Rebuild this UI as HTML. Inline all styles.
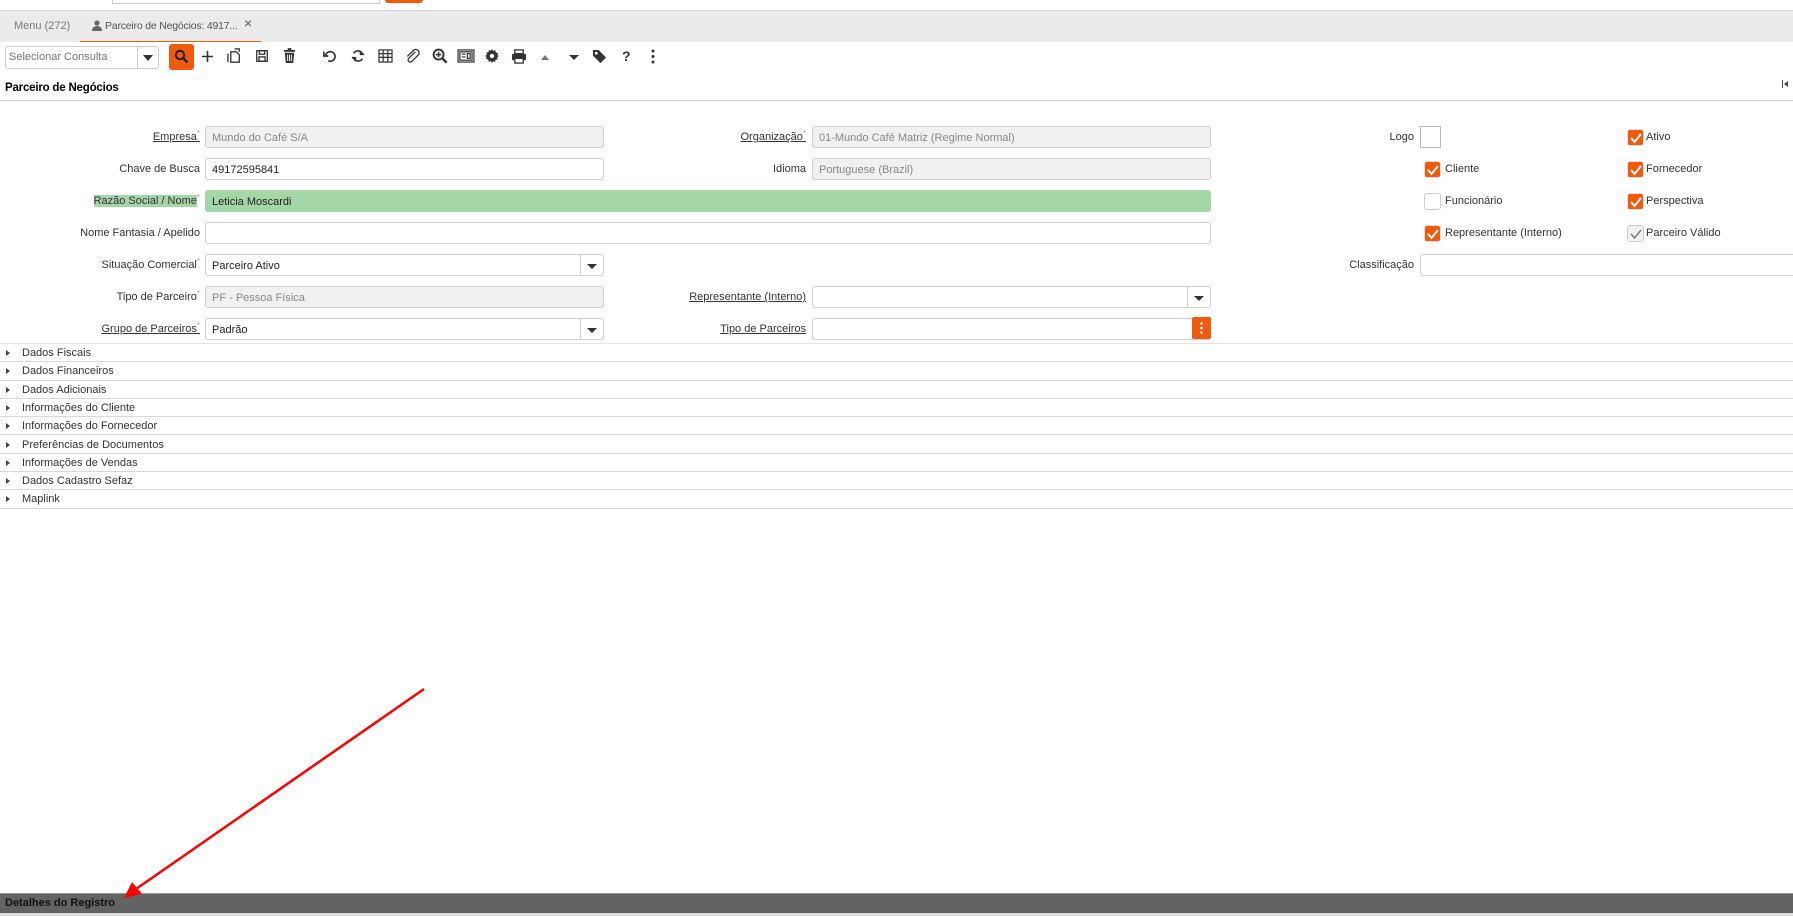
<!DOCTYPE html>
<html><head><meta charset="utf-8"><style>
*{box-sizing:border-box;margin:0;padding:0}
body{width:1793px;height:916px;position:relative;background:#fff;font-family:"Liberation Sans",sans-serif;font-size:11px;color:#333;overflow:hidden}
.a{position:absolute}
.lbl{position:absolute;text-align:right;white-space:nowrap;line-height:23px}
.lbl.u{text-decoration:underline}
.req::after{content:"*";color:#e88;font-size:8px;vertical-align:top;position:relative;top:-4px}
.in{position:absolute;height:22px;border:1px solid #d0d0d0;border-radius:3px;background:#fff;padding-left:6px;line-height:22px;color:#222;white-space:nowrap}
.ro{background:#f1f1f1;color:#888}
.tri{position:absolute;right:6px;top:9px;width:0;height:0;border-left:5px solid transparent;border-right:5px solid transparent;border-top:5px solid #333}
.sep{position:absolute;right:22px;top:0;width:1px;height:20px;background:#d0d0d0}
.cb{position:absolute;width:17px;height:17px;border-radius:3px;background:#f05a0a;border:1px solid #e0e0e0}
.cb.off{background:#fff;border:1px solid #ccc}
.cb.gr{background:#f2f2f2;border:1px solid #ccc}
.cb svg{position:absolute;left:1px;top:1px}
.cl{position:absolute;line-height:17px;white-space:nowrap}
.sec{position:absolute;left:0;width:1793px;height:18.3px;border-bottom:1px solid #d8d8d8;line-height:18px;padding-left:22px;font-size:11px}
.sec::before{content:"";position:absolute;left:6px;top:6px;border-top:3px solid transparent;border-bottom:3px solid transparent;border-left:4px solid #444}
</style></head><body>
<!-- top -->
<div class="a" style="left:112px;top:0;width:268px;height:4px;border:1px solid #ccc;border-top:none"></div>
<div class="a" style="left:385px;top:0;width:38px;height:3px;background:#f05a0a;border-radius:0 0 3px 3px"></div>
<div class="a" style="left:0;top:10px;width:1793px;height:32px;background:#ebebeb;border-top:1px solid #d0d0d0"></div>
<div class="a" style="left:14px;top:20px;color:#777;font-size:11px">Menu (272)</div>
<div class="a" style="left:80px;top:11px;width:181px;height:31px;border-bottom:1px solid #f05a0a"></div>
<svg class="a" style="left:92px;top:20px" width="10" height="11" viewBox="0 0 10 11"><circle cx="5" cy="3" r="2.6" fill="#666"/><path d="M0 11 Q0 6 5 6 Q10 6 10 11Z" fill="#666"/></svg>
<div class="a" style="left:105px;top:20px;color:#555;font-size:10.5px;letter-spacing:-0.2px">Parceiro de Negócios: 4917...</div>
<div class="a" style="left:244px;top:15px;color:#555;font-size:14px">×</div>
<!-- toolbar -->
<div class="a" style="left:5px;top:46px;width:154px;height:23px;border:1px solid #ccc;border-radius:3px"></div>
<div class="a" style="left:9px;top:51px;color:#777">Selecionar Consulta</div>
<div class="a" style="left:137px;top:46px;width:1px;height:23px;background:#ccc"></div>
<div class="a" style="left:143px;top:55px;border-left:5px solid transparent;border-right:5px solid transparent;border-top:6px solid #333"></div>
<div class="a" style="left:169px;top:44px;width:25px;height:26px;background:#f05a0a;border-radius:3px"></div>
<svg class="a" style="left:174px;top:49px" width="15" height="15" viewBox="0 0 15 15"><circle cx="6" cy="6" r="4.2" stroke="#222" stroke-width="2" fill="none"/><path d="M9 9 L13.5 13.5" stroke="#222" stroke-width="2.4"/></svg>
<svg class="a" style="left:201px;top:50px" width="13" height="13"><path d="M6.5 1V12M1 6.5H12" stroke="#333" stroke-width="1.6"/></svg>
<svg class="a" style="left:227px;top:48px" width="17" height="17" viewBox="0 0 18 18" fill="none" stroke="#333" stroke-width="1.4"><path d="M4 4h6l3 3v8H4z"/><path d="M8 1h5v3M1 6v9"/></svg>
<svg class="a" style="left:255px;top:49px" width="14" height="14" viewBox="0 0 16 16" fill="none" stroke="#333" stroke-width="1.5"><rect x="2" y="2" width="12" height="12"/><rect x="5" y="2" width="6" height="4"/><rect x="4.5" y="9" width="7" height="5"/></svg>
<svg class="a" style="left:283px;top:48px" width="13" height="16" viewBox="0 0 14 17"><rect x="1" y="2" width="12" height="2" fill="#333"/><rect x="5" y="0" width="4" height="2" fill="#333"/><path d="M2 5h10l-1 11H3z" fill="#333"/><path d="M5 7v7M7 7v7M9 7v7" stroke="#fff" stroke-width="1"/></svg>
<svg class="a" style="left:323px;top:49px" width="14" height="14" viewBox="0 0 16 16" fill="none" stroke="#333" stroke-width="1.9"><path d="M3 7A5.5 5.5 0 1 1 6 13.5"/><path d="M1 3v5h5" /></svg>
<svg class="a" style="left:351px;top:49px" width="14" height="14" viewBox="0 0 16 16" fill="none" stroke="#333" stroke-width="1.9"><path d="M13 6A5.5 5.5 0 0 0 3 5M3 10A5.5 5.5 0 0 0 13 11"/><path d="M11 2v4h4M5 14v-4H1"/></svg>
<svg class="a" style="left:378px;top:49px" width="15" height="14" viewBox="0 0 16 15" fill="none" stroke="#333" stroke-width="1.3"><rect x="1" y="1" width="14" height="13"/><path d="M1 5h14M1 9h14M5.5 1v13M10.5 1v13"/></svg>
<svg class="a" style="left:405px;top:48px" width="15" height="16" viewBox="0 0 16 17" fill="none" stroke="#333" stroke-width="1.4"><path d="M11 4 L4 11 a2.3 2.3 0 0 0 3.3 3.3 L14 7.5 a3.5 3.5 0 0 0 -5 -5 L2.5 9"/></svg>
<svg class="a" style="left:432px;top:48px" width="16" height="16" viewBox="0 0 17 17"><circle cx="7" cy="7" r="5.3" stroke="#333" stroke-width="2" fill="none"/><path d="M11 11 L15.5 15.5" stroke="#333" stroke-width="2.6"/><path d="M7 4v6M4 7h6" stroke="#333" stroke-width="1.6"/></svg>
<svg class="a" style="left:457px;top:49px" width="18" height="14" viewBox="0 0 19 15" fill="none" stroke="#333" stroke-width="1.3"><rect x="1" y="1" width="17" height="13"/><rect x="3" y="3" width="13" height="9"/><path d="M5 5.5h4M5 8.5h4M11 5h3v5h-3z"/></svg>
<svg class="a" style="left:485px;top:49px" width="14" height="14" viewBox="0 0 16 16"><path d="M8 0l1.4 2.2 2.5-.8.4 2.6 2.6.4-.8 2.5L16 8l-2.2 1.4.8 2.5-2.6.4-.4 2.6-2.5-.8L8 16l-1.4-2.2-2.5.8-.4-2.6-2.6-.4.8-2.5L0 8l2.2-1.4-.8-2.5 2.6-.4.4-2.6 2.5.8z" fill="#333"/><circle cx="8" cy="8" r="2.5" fill="#fff"/></svg>
<svg class="a" style="left:511px;top:49px" width="16" height="15" viewBox="0 0 17 16"><rect x="4" y="1" width="9" height="4" fill="none" stroke="#333" stroke-width="1.4"/><rect x="1" y="5" width="15" height="7" rx="1.5" fill="#333"/><rect x="4" y="10" width="9" height="5" fill="#fff" stroke="#333" stroke-width="1.4"/></svg>
<div class="a" style="left:541px;top:55px;border-left:4px solid transparent;border-right:4px solid transparent;border-bottom:5px solid #777"></div>
<div class="a" style="left:569px;top:55px;border-left:5px solid transparent;border-right:5px solid transparent;border-top:5px solid #333"></div>
<svg class="a" style="left:592px;top:49px" width="15" height="15" viewBox="0 0 16 16"><path d="M1 1h6l8 8-6 6-8-8z" fill="#333"/><circle cx="4.5" cy="4.5" r="1.5" fill="#fff"/></svg>
<div class="a" style="left:622px;top:48px;font-weight:bold;font-size:14px;color:#333">?</div>
<svg class="a" style="left:651px;top:49px" width="4" height="15"><circle cx="2" cy="2" r="1.5" fill="#333"/><circle cx="2" cy="7.5" r="1.5" fill="#333"/><circle cx="2" cy="13" r="1.5" fill="#333"/></svg>
<!-- title -->
<div class="a" style="left:5px;top:82px;font-size:11.5px;color:#000;font-weight:bold;letter-spacing:-0.2px">Parceiro de Negócios</div>
<div class="a" style="left:1782px;top:80px;width:1px;height:8px;background:#444"></div>
<div class="a" style="left:1784px;top:81px;border-top:3px solid transparent;border-bottom:3px solid transparent;border-right:4px solid #444"></div>
<div class="a" style="left:0;top:100px;width:1793px;height:1px;background:#ccc"></div>
<!-- left column -->
<div class="lbl u req" style="right:1593px;top:126px">Empresa</div>
<div class="in ro" style="left:205px;top:126px;width:399px">Mundo do Café S/A</div>
<div class="lbl" style="right:1593px;top:158px">Chave de Busca</div>
<div class="in" style="left:205px;top:158px;width:399px">49172595841</div>
<div class="lbl req" style="right:1593px;top:190px"><span style="background:#a5d6a7">Razão Social / Nome</span></div>
<div class="in" style="left:205px;top:190px;width:1006px;background:#a5d6a7;border-color:#a5d6a7">Leticia Moscardi</div>
<div class="lbl" style="right:1593px;top:222px">Nome Fantasia / Apelido</div>
<div class="in" style="left:205px;top:222px;width:1006px"></div>
<div class="lbl req" style="right:1593px;top:254px">Situação Comercial</div>
<div class="in" style="left:205px;top:254px;width:399px">Parceiro Ativo<span class="sep"></span><span class="tri"></span></div>
<div class="lbl req" style="right:1593px;top:286px">Tipo de Parceiro</div>
<div class="in ro" style="left:205px;top:286px;width:399px">PF - Pessoa Física</div>
<div class="lbl u req" style="right:1593px;top:318px">Grupo de Parceiros</div>
<div class="in" style="left:205px;top:318px;width:399px">Padrão<span class="sep"></span><span class="tri"></span></div>
<!-- middle -->
<div class="lbl u req" style="right:987px;top:126px">Organização</div>
<div class="in ro" style="left:812px;top:126px;width:399px">01-Mundo Café Matriz (Regime Normal)</div>
<div class="lbl" style="right:987px;top:158px">Idioma</div>
<div class="in ro" style="left:812px;top:158px;width:399px">Portuguese (Brazil)</div>
<div class="lbl u" style="right:987px;top:286px">Representante (Interno)</div>
<div class="in" style="left:812px;top:286px;width:399px"><span class="sep"></span><span class="tri"></span></div>
<div class="lbl u" style="right:987px;top:318px">Tipo de Parceiros</div>
<div class="in" style="left:812px;top:318px;width:399px"></div>
<div class="a" style="left:1192px;top:317px;width:19px;height:22px;background:#f05a0a;border-radius:2px"></div>
<svg class="a" style="left:1200px;top:322px" width="3" height="12"><circle cx="1.5" cy="1.5" r="1.3" fill="#fff"/><circle cx="1.5" cy="6" r="1.3" fill="#fff"/><circle cx="1.5" cy="10.5" r="1.3" fill="#fff"/></svg>
<!-- right -->
<div class="lbl" style="right:379px;top:126px">Logo</div>
<div class="a" style="left:1420px;top:126px;width:21px;height:22px;border:1px solid #bbb"></div>
<div class="lbl" style="right:379px;top:254px">Classificação</div>
<div class="in" style="left:1420px;top:254px;width:380px"></div>
<div class="cb" style="left:1627px;top:129px"><svg width="14" height="14"><path d="M2 7l3.5 4L12 3" stroke="#fff" stroke-width="2" fill="none"/></svg></div><div class="cl" style="left:1646px;top:129px">Ativo</div>
<div class="cb" style="left:1424px;top:161px"><svg width="14" height="14"><path d="M2 7l3.5 4L12 3" stroke="#fff" stroke-width="2" fill="none"/></svg></div><div class="cl" style="left:1445px;top:161px">Cliente</div>
<div class="cb" style="left:1627px;top:161px"><svg width="14" height="14"><path d="M2 7l3.5 4L12 3" stroke="#fff" stroke-width="2" fill="none"/></svg></div><div class="cl" style="left:1646px;top:161px">Fornecedor</div>
<div class="cb off" style="left:1424px;top:193px"></div><div class="cl" style="left:1445px;top:193px">Funcionário</div>
<div class="cb" style="left:1627px;top:193px"><svg width="14" height="14"><path d="M2 7l3.5 4L12 3" stroke="#fff" stroke-width="2" fill="none"/></svg></div><div class="cl" style="left:1646px;top:193px">Perspectiva</div>
<div class="cb" style="left:1424px;top:225px"><svg width="14" height="14"><path d="M2 7l3.5 4L12 3" stroke="#fff" stroke-width="2" fill="none"/></svg></div><div class="cl" style="left:1445px;top:225px">Representante (Interno)</div>
<div class="cb gr" style="left:1627px;top:225px"><svg width="14" height="14"><path d="M2 7l3.5 4L12 3" stroke="#777" stroke-width="1.4" fill="none"/></svg></div><div class="cl" style="left:1646px;top:225px">Parceiro Válido</div>
<!-- sections -->
<div class="a" style="left:0;top:343px;width:1793px;height:1px;background:#e4e4e4"></div>
<div class="sec" style="top:344px">Dados Fiscais</div>
<div class="sec" style="top:362.3px">Dados Financeiros</div>
<div class="sec" style="top:380.6px">Dados Adicionais</div>
<div class="sec" style="top:398.9px">Informações do Cliente</div>
<div class="sec" style="top:417.2px">Informações do Fornecedor</div>
<div class="sec" style="top:435.5px">Preferências de Documentos</div>
<div class="sec" style="top:453.8px">Informações de Vendas</div>
<div class="sec" style="top:472.1px">Dados Cadastro Sefaz</div>
<div class="sec" style="top:490.4px">Maplink</div>
<!-- bottom -->
<div class="a" style="left:0;top:893px;width:1793px;height:20px;background:#636363;border-top:1px solid #999"></div>
<div class="a" style="left:5px;top:897px;font-weight:bold;font-size:11px;color:#111">Detalhes do Registro</div>
<div class="a" style="left:0;top:913px;width:1793px;height:3px;background:#ddd"></div>
<svg class="a" style="left:0;top:0" width="1793" height="916"><line x1="424" y1="689" x2="136" y2="889" stroke="#f00" stroke-width="2.5"/><path d="M124 898 L132 882 L142 894Z" fill="#f00"/></svg>
</body></html>
